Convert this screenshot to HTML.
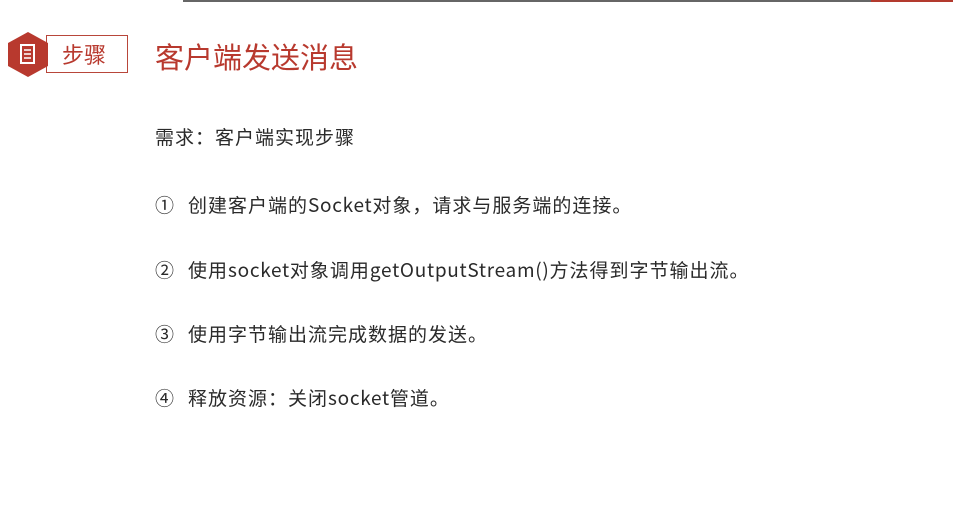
<!DOCTYPE html>
<html><head><meta charset="utf-8"><style>
body{margin:0;width:953px;height:510px;background:#fff;position:relative;overflow:hidden;font-family:"Liberation Sans","Noto Sans CJK SC",sans-serif;}
.t{position:absolute;font-size:19px;color:#2a2a2a;white-space:nowrap;line-height:22px;font-family:"Noto Sans CJK SC",sans-serif;letter-spacing:1px}
.n{position:absolute;left:155px}
.l{letter-spacing:0.7px}
</style></head><body>
<div style="position:absolute;left:183px;top:0;width:688px;height:2px;background:#666"></div>
<div style="position:absolute;left:871px;top:0;width:82px;height:2px;background:#b33a2e"></div>
<div style="position:absolute;left:46px;top:35px;width:82px;height:38px;border:1px solid #b8463a;box-sizing:border-box"></div>
<svg style="position:absolute;left:7px;top:31px" width="42" height="47" viewBox="0 0 42 47">
<polygon points="21,1 41,12 41,35 21,46 1,35 1,12" fill="#b8392e"/>
<rect x="14" y="14" width="13" height="18" fill="none" stroke="#fff" stroke-width="2"/>
<path d="M17 19h7M17 23h7M17 27h7" stroke="#fff" stroke-width="1.6"/>
</svg>
<div class="t" style="left:62px;top:39px;font-size:22px;line-height:30px;color:#b8392e;letter-spacing:0">步骤</div>
<div class="t" style="left:155px;top:37px;font-size:29px;line-height:38px;color:#b8392e;letter-spacing:0">客户端发送消息</div>
<div class="t" style="left:155px;top:126px">需求：客户端实现步骤</div>
<div class="t" style="top:194px;left:0;width:953px"><span class="n">①</span><span style="position:absolute;left:188px">创建客户端的<span class="l">Socket</span>对象，请求与服务端的连接。</span></div>
<div class="t" style="top:259px;left:0;width:953px"><span class="n">②</span><span style="position:absolute;left:188px">使用<span class="l">socket</span>对象调用<span class="l">getOutputStream()</span>方法得到字节输出流。</span></div>
<div class="t" style="top:323px;left:0;width:953px"><span class="n">③</span><span style="position:absolute;left:188px">使用字节输出流完成数据的发送。</span></div>
<div class="t" style="top:387px;left:0;width:953px"><span class="n">④</span><span style="position:absolute;left:188px">释放资源：关闭<span class="l">socket</span>管道。</span></div>
</body></html>
